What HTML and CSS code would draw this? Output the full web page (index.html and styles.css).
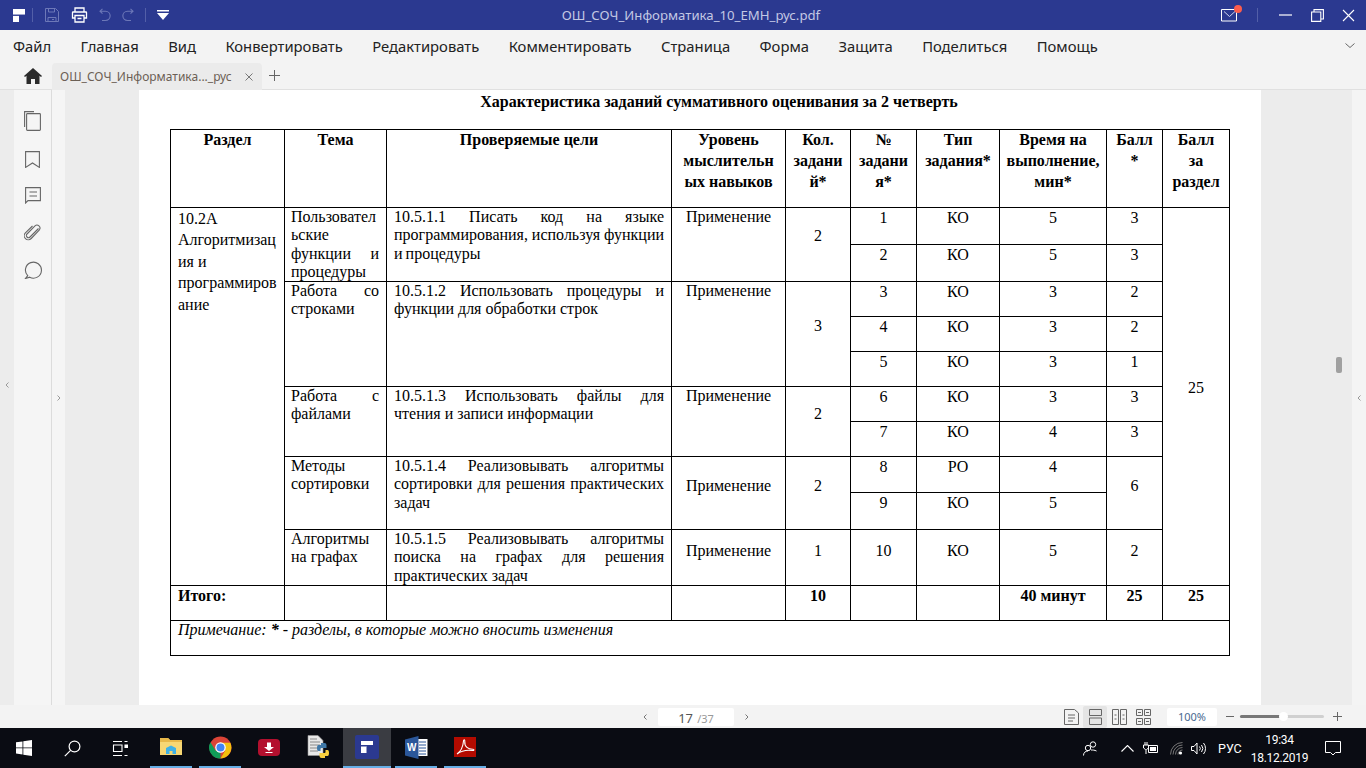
FILE: index.html
```html
<!DOCTYPE html>
<html lang="ru">
<head>
  <meta charset="UTF-8">
  <title>ОШ_СОЧ_Информатика_10_ЕМН_рус.pdf</title>
  <link rel="stylesheet" href="styles.css">
</head>
<body>
  <!-- title bar -->
  <div class="titlebar">
    <div class="quick">
      <svg class="logo" width="12" height="13" viewBox="0 0 12 13"><path fill="#fff" d="M0 0h12v6H6v7H0z"/><path fill="#2b3990" d="M0 5.500h12v1H6.500v.5H0z" opacity=".9"/></svg>
      <span class="sep"></span>
      <svg class="qi dim" width="16" height="16" viewBox="0 0 16 16" fill="none" stroke="#6d78b8"><path d="M1.500 1.500h10l3 3v10h-13z"/><path d="M4.500 1.500v3.500h6v-3.500M4 14.500v-4h8v4M8 12.500h2"/></svg>
      <svg class="qi" width="17" height="16" viewBox="0 0 17 16" fill="none" stroke="#fff" stroke-width="1.300"><path d="M4 5V1h9v4M4 11H1.500V5.500q0-.5.500-.5h13q.5 0 .5.500V11H13"/><path d="M4 8.500h9v6.500H4zM6.500 11.500h4"/></svg>
      <svg class="qi" width="12" height="14" viewBox="0 0 12 14" fill="none" stroke="#6d78b8" stroke-width="1.100"><path d="M3.500.8 1 3.200l2.500 2.400M1 3.200h5.500a4.500 4.500 0 0 1 0 9.300H3"/></svg>
      <svg class="qi" width="12" height="14" viewBox="0 0 12 14" fill="none" stroke="#6d78b8" stroke-width="1.100"><path d="M8.500.8 11 3.200 8.500 5.600M11 3.200H5.500a4.500 4.500 0 0 0 0 9.300H9"/></svg>
      <span class="sep"></span>
      <svg class="qi" width="12" height="10" viewBox="0 0 12 10"><path fill="#fff" d="M0 0h12v1.500H0zM0 3h12L6 10z"/></svg>
    </div>
    <div class="doc-title">ОШ_СОЧ_Информатика_10_ЕМН_рус.pdf</div>
    <div class="winbtns">
      <span class="mail">
        <svg width="17" height="13" viewBox="0 0 17 13" fill="none" stroke="#fff"><path d="M.5.500h15v11.500H.5z"/><path d="m3 2.500 5.500 5 5.500-5" stroke="#cfd3ec"/></svg>
        <i class="dot"></i>
      </span>
      <span class="sep sep-r"></span>
      <svg width="14" height="2" viewBox="0 0 14 2"><path stroke="#fff" stroke-width="1.200" d="M0 1h13"/></svg>
      <svg width="13" height="13" viewBox="0 0 13 13" fill="none" stroke="#fff" stroke-width="1.100"><path d="M.6 3h9.200v9.400H.6z"/><path d="M3 3V.6h9.400V10H10"/></svg>
      <svg width="13" height="13" viewBox="0 0 13 13" fill="none" stroke="#fff" stroke-width="1.100"><path d="m1 1 11 11M12 1 1 12"/></svg>
    </div>
  </div>

  <!-- menu -->
  <div class="menubar">
    <span>Файл</span><span>Главная</span><span>Вид</span><span>Конвертировать</span><span>Редактировать</span><span>Комментировать</span><span>Страница</span><span>Форма</span><span>Защита</span><span>Поделиться</span><span>Помощь</span>
    <svg class="collapse" width="10" height="6" viewBox="0 0 10 6" fill="none" stroke="#666"><path d="m.5.500 4.500 4 4.500-4"/></svg>
  </div>

  <!-- tabs -->
  <div class="tabbar">
    <div class="home">
      <svg width="18" height="16" viewBox="0 0 18 16"><path fill="#2a2a2a" d="M9 0 0 8l1 1 1.500-1.200V16H7v-5h4v5h4.500V7.800L17 9l1-1z"/></svg>
    </div>
    <div class="tab">
      <span class="tab-name">ОШ_СОЧ_Информатика..._рус</span>
      <svg width="8" height="8" viewBox="0 0 8 8" fill="none" stroke="#777"><path d="m.5.500 7 7M7.500.500l-7 7"/></svg>
    </div>
    <svg class="plus" width="11" height="11" viewBox="0 0 11 11" stroke="#666"><path d="M5.500 0v11M0 5.500h11"/></svg>
  </div>

  <!-- workspace -->
  <div class="workspace">
    <div class="edge"><svg width="4" height="6" viewBox="0 0 4 6" fill="none" stroke="#999"><path d="M3.500.5 1 3l2.500 2.500"/></svg></div>
    <div class="sidebar">
      <svg width="17" height="20" viewBox="0 0 17 20" fill="none" stroke="#666" stroke-width="1.100"><path d="M10 .6H.6V16"/><rect x="2.600" y="2.600" width="13.800" height="16.800" rx=".8"/></svg>
      <svg width="15" height="17" viewBox="0 0 15 17" fill="none" stroke="#666" stroke-width="1.100"><path d="M.6.600h13.800v15.800L7.500 12 .6 16.400z"/></svg>
      <svg width="16" height="17" viewBox="0 0 16 17" fill="none" stroke="#666" stroke-width="1.100"><path d="M.6.600h14.800v13H3L.6 16zM4.500 5h7.500M4.500 9h7.500"/></svg>
      <svg width="17" height="18" viewBox="0 0 17 18" fill="none" stroke="#666" stroke-width="1.100"><path d="M14.500 4.500 6 13a2 2 0 0 1-3-3l8-8.200a3 3 0 0 1 4.400 4L7.200 14.500a4 4 0 0 1-5.800-5.700L8.500 2"/></svg>
      <svg width="18" height="18" viewBox="0 0 18 18" fill="none" stroke="#666" stroke-width="1.100"><path d="M3.700 14.700a8 8 0 1 1 2 1.500L1.500 17.500z"/></svg>
    </div>
    <div class="fold"><svg width="4" height="6" viewBox="0 0 4 6" fill="none" stroke="#999"><path d="M.5.500 3 3 .5 5.500"/></svg></div>
    <div class="viewer">
      <div class="page">
        <h1 class="doc-head">Характеристика заданий суммативного оценивания за 2 четверть</h1>
        <table class="spec">
          <colgroup>
            <col class="c1"><col class="c2"><col class="c3"><col class="c4"><col class="c5"><col class="c6"><col class="c7"><col class="c8"><col class="c9"><col class="c10">
          </colgroup>
          <thead>
            <tr class="rh">
              <th>Раздел</th><th>Тема</th><th>Проверяемые цели</th><th>Уровень мыслительн ых навыков</th><th>Кол. задани й*</th><th>№ задани я*</th><th>Тип задания*</th><th class="wide">Время на выполнение, мин*</th><th>Балл *</th><th>Балл за раздел</th>
            </tr>
          </thead>
          <tbody>
            <tr class="r37">
              <td rowspan="10" class="sect">10.2A Алгоритмизация и программирование</td>
              <td rowspan="2" class="just topic">Пользовательские функции и процедуры</td>
              <td rowspan="2" class="just tight">10.5.1.1 Писать код на языке программирования, используя функции и процедуры</td>
              <td rowspan="2" class="lvl">Применение</td>
              <td rowspan="2" class="mid">2</td>
              <td class="cen">1</td><td class="cen">КО</td><td class="cen">5</td><td class="cen">3</td>
              <td rowspan="10" class="mid">25</td>
            </tr>
            <tr class="r37"><td class="cen">2</td><td class="cen">КО</td><td class="cen">5</td><td class="cen">3</td></tr>
            <tr class="r35">
              <td rowspan="3" class="just topic">Работа со строками</td>
              <td rowspan="3" class="just">10.5.1.2 Использовать процедуры и функции для обработки строк</td>
              <td rowspan="3" class="lvl">Применение</td>
              <td rowspan="3" class="mid">3</td>
              <td class="cen">3</td><td class="cen">КО</td><td class="cen">3</td><td class="cen">2</td>
            </tr>
            <tr class="r35"><td class="cen">4</td><td class="cen">КО</td><td class="cen">3</td><td class="cen">2</td></tr>
            <tr class="r35"><td class="cen">5</td><td class="cen">КО</td><td class="cen">3</td><td class="cen">1</td></tr>
            <tr class="r35">
              <td rowspan="2" class="just topic">Работа с файлами</td>
              <td rowspan="2" class="just">10.5.1.3 Использовать файлы для чтения и записи информации</td>
              <td rowspan="2" class="lvl">Применение</td>
              <td rowspan="2" class="mid">2</td>
              <td class="cen">6</td><td class="cen">КО</td><td class="cen">3</td><td class="cen">3</td>
            </tr>
            <tr class="r35"><td class="cen">7</td><td class="cen">КО</td><td class="cen">4</td><td class="cen">3</td></tr>
            <tr class="r36">
              <td rowspan="2" class="topic">Методы сортировки</td>
              <td rowspan="2" class="just">10.5.1.4 Реализовывать алгоритмы сортировки для решения практических задач</td>
              <td rowspan="2" class="mid low">Применение</td>
              <td rowspan="2" class="mid low">2</td>
              <td class="cen">8</td><td class="cen">РО</td><td class="cen">4</td>
              <td rowspan="2" class="mid low">6</td>
            </tr>
            <tr class="r37"><td class="cen">9</td><td class="cen">КО</td><td class="cen">5</td></tr>
            <tr class="r56">
              <td class="topic">Алгоритмы на графах</td>
              <td class="just">10.5.1.5 Реализовывать алгоритмы поиска на графах для решения практических задач</td>
              <td class="mid low">Применение</td>
              <td class="mid low">1</td><td class="mid low">10</td><td class="mid low">КО</td><td class="mid low">5</td><td class="mid low">2</td>
            </tr>
            <tr class="r35 total">
              <td class="left">Итого:</td><td></td><td></td><td></td><td>10</td><td></td><td></td><td>40 минут</td><td>25</td><td>25</td>
            </tr>
            <tr class="r35"><td colspan="10" class="note">Примечание: <b>*</b> - разделы, в которые можно вносить изменения</td></tr>
          </tbody>
        </table>
      </div>
      <div class="gutter"><span class="thumb"></span></div>
    </div>
    <div class="right-fold"><svg width="4" height="6" viewBox="0 0 4 6" fill="none" stroke="#999"><path d="M3.500.5 1 3l2.500 2.500"/></svg></div>
  </div>

  <!-- status bar -->
  <div class="statusbar">
    <div class="pager">
      <svg width="4" height="6" viewBox="0 0 4 6" fill="none" stroke="#777"><path d="M3.500.5 1 3l2.500 2.500"/></svg>
      <div class="page-box"><span class="cur">17</span> <span class="tot">/37</span></div>
      <svg width="4" height="6" viewBox="0 0 4 6" fill="none" stroke="#777"><path d="M.5.500 3 3 .5 5.500"/></svg>
    </div>
    <div class="views">
      <span class="view"><svg width="15" height="16" viewBox="0 0 15 16" fill="none" stroke="#666"><path d="M.5.500h10l4 3.500v11.500H.5zM4 6h7M4 9h7M4 12h5"/></svg></span>
      <span class="view on"><svg width="15" height="16" viewBox="0 0 15 16" fill="none" stroke="#666"><path d="M1.500.500h12v6h-12zM1.500 9h12v6.500h-12z"/></svg></span>
      <span class="view"><svg width="15" height="16" viewBox="0 0 15 16" fill="none" stroke="#666"><path d="M.5.500h6v15h-6zM8.500.500h6v15h-6zM2.500 6h2M2.500 10h2M10.500 6h2M10.500 10h2"/></svg></span>
      <span class="view"><svg width="15" height="16" viewBox="0 0 15 16" fill="none" stroke="#666"><path d="M.5.500h6v6h-6zM8.500.500h6v6h-6zM.5 9.500h6v6h-6zM8.500 9.500h6v6h-6zM2 3.500h3M10 3.500h3M2 12.500h3M10 12.500h3"/></svg></span>
    </div>
    <div class="zoom-box">100%</div>
    <svg class="zm" width="8" height="1" viewBox="0 0 8 1"><path stroke="#666" d="M0 .5h8"/></svg>
    <div class="slider"><i class="fill"></i><i class="knob"></i></div>
    <svg class="zp" width="9" height="9" viewBox="0 0 9 9" stroke="#666"><path d="M4.500 0v9M0 4.500h9"/></svg>
  </div>

  <!-- windows taskbar -->
  <div class="taskbar">
    <span class="tb-btn"><svg width="16" height="16" viewBox="0 0 16 16"><path fill="#fff" d="M0 2.300 6.500 1.400v6.100H0zM7.300 1.300 16 0v7.500H7.300zM0 8.300h6.500v6.200L0 13.600zM7.300 8.300H16V16l-8.700-1.300z"/></svg></span>
    <span class="tb-btn"><svg width="17" height="17" viewBox="0 0 17 17" fill="none" stroke="#fff" stroke-width="1.200"><circle cx="10.500" cy="6.500" r="5.400"/><path d="M6.600 10.400.8 16.200"/></svg></span>
    <span class="tb-btn"><svg width="16" height="15" viewBox="0 0 16 15" fill="none" stroke="#fff" stroke-width="1.100"><path d="M1 .5h9M1 14.500h9M1.500 4h8.500v6.500H1.500zM12.500.5h3M12.500 14.500h3"/><path d="M13 4h2.500v2.500H13z" fill="#fff"/></svg></span>
    <div class="apps">
      <span class="app open"><svg width="22" height="20" viewBox="0 0 22 20"><path fill="#f7d774" d="M0 1h8l2 2h12v15H0z"/><path fill="#e8b94a" d="M0 1h8l2 2h12v2H0z"/><path fill="#3fb1e6" d="M6 17v-6l5-2.500 5 2.500v6h-3.500v-3h-3v3z"/></svg></span>
      <span class="app open"><svg width="23" height="23" viewBox="0 0 24 24"><circle cx="12" cy="12" r="11.500" fill="#db4437"/><path fill="#0f9d58" d="M12 23.500A11.500 11.500 0 0 1 1.500 6.500L7 15.500l5 1z"/><path fill="#f4c20d" d="M12 7h10.200A11.500 11.500 0 0 1 12 23.500l5-8.500z"/><circle cx="12" cy="12" r="5.500" fill="#fff"/><circle cx="12" cy="12" r="4.200" fill="#4285f4"/></svg></span>
      <span class="app"><svg width="22" height="17" viewBox="0 0 22 17"><rect width="22" height="17" rx="4" fill="#b3102e"/><path fill="#fff" d="M9 3.500h4v4.500h3l-5 4-5-4h3z"/><path fill="#fff" d="M7.500 13h7v1h-7z"/></svg></span>
      <span class="app"><svg width="23" height="24" viewBox="0 0 23 24"><path fill="#e8e8e8" stroke="#999" stroke-width=".6" d="M1 .5h10l5 5v15H1z"/><path stroke="#888" d="M3 4h7M3 7h10M3 10h10M3 13h8M3 16h8"/><path fill="#3f78a8" d="M14 8h3.500q2 0 2 2v3h-5q-1 0-1 1v2h-2q-1.500 0-1.500-3t1.500-3H14z"/><path fill="#f8cf3e" d="M18 23h-3.500q-2 0-2-2v-3h5q1 0 1-1v-2h2q1.500 0 1.500 3t-1.500 3H18z"/></svg></span>
      <span class="app active"><svg width="24" height="24" viewBox="0 0 24 24"><rect width="24" height="24" rx="2" fill="#2b3990"/><path fill="#fff" d="M6 6h12v4.500h-6.500V18H6z"/><path fill="#2b3990" d="M6 10h12v1H11.500v.5H6z"/></svg></span>
      <span class="app open"><svg width="23" height="23" viewBox="0 0 23 23"><path fill="#fff" d="M11 3h11.500v17H11z"/><path stroke="#2b579a" d="M14 6h7M14 9h7M14 12h7M14 15h7M14 18h7"/><path fill="#2b579a" d="M0 3.500 13.500 0v23L0 19.500z"/><text class="word-w" x="2" y="15">W</text></svg></span>
      <span class="app open"><svg width="22" height="20" viewBox="0 0 22 20"><rect width="22" height="20" fill="#b30b00"/><path fill="none" stroke="#fff" stroke-width="1.100" d="M3 17c3-2 6-7 6.500-13 .2-2 1.500-1.500 1.300.5-.6 5 3.500 8 8.200 7.800 1.500 0 1 1.500-.5 1.200C12 12.500 7 14 3 17z"/></svg></span>
    </div>
    <div class="tray">
      <svg class="t-people" width="15" height="15" viewBox="0 0 15 15" fill="none" stroke="#fff"><circle cx="10" cy="3.500" r="2.700"/><circle cx="5" cy="7" r="2.700"/><path d="M.5 14.500c0-3 2-4.500 4.500-4.500M8 9c2 0 3.500 0 5.500 1"/></svg>
      <svg class="t-up" width="13" height="7" viewBox="0 0 13 7" fill="none" stroke="#fff" stroke-width="1.100"><path d="m.5 6.500 6-6 6 6"/></svg>
      <svg class="t-bat" width="15" height="12" viewBox="0 0 15 12" fill="none" stroke="#fff"><path d="M5.500 3.500h9v7h-9z"/><path fill="#fff" stroke="none" d="M7 5h6v4H7z"/><path d="M2 0v3M4 0v3M.5 3h5v3l-2 1.500H2.500L.5 6zM3 8v4"/></svg>
      <svg class="t-wifi" width="13" height="13" viewBox="0 0 13 13" fill="none" stroke="#777"><path d="M.5 12.500a12 12 0 0 1 12-12M3 12.500A9.500 9.500 0 0 1 12.500 3M5.500 12.500a7 7 0 0 1 7-7M8 12.500a4.500 4.500 0 0 1 4.500-4.500"/><circle cx="10.500" cy="11" r="1.600" fill="#fff" stroke="none"/></svg>
      <svg class="t-vol" width="16" height="13" viewBox="0 0 16 13" fill="none" stroke="#fff"><path d="M.5 4.500h2.500l3-3.500v11l-3-3.500H.5zM8.500 4.500a3 3 0 0 1 0 4M10.500 3a5.500 5.500 0 0 1 0 7M12.500 1a8.500 8.500 0 0 1 0 11"/></svg>
      <span class="lang">РУС</span>
      <div class="clock"><span>19:34</span><span>18.12.2019</span></div>
      <svg class="t-note" width="16" height="15" viewBox="0 0 16 15" fill="none" stroke="#fff"><path d="M.5.500h15v11h-5L8 14l-2.500-2.500h-5z"/></svg>
    </div>
  </div>
</body>
</html>
```

FILE: styles.css
```css
* { box-sizing:border-box; }
html, body { margin:0; height:100%; }
body { width:1366px; height:768px; overflow:hidden; display:flex; flex-direction:column; font-family:"Noto Sans", sans-serif; background:#f3f3f3; }

/* title bar */
.titlebar { height:30px; background:#2b3990; display:flex; align-items:center; position:relative; flex:none; }
.quick { display:flex; align-items:center; padding-left:13px; }
.logo { margin-right:7px; }
.sep { width:1px; height:14px; background:#535fa8; }
.qi { margin-left:11px; }
.quick .qi + .sep { margin-left:11px; }
.doc-title { position:absolute; left:16px; right:0; text-align:center; font-size:13.200px; color:#c3c8e4; }
.winbtns { margin-left:auto; display:flex; align-items:center; gap:18px; padding-right:11px; }
.mail { position:relative; display:flex; margin-right:1px; }
.dot { position:absolute; top:-4px; right:-4px; width:8px; height:8px; border-radius:50%; background:#fc5d4c; }
.sep-r { margin-right:3px; }

/* menu */
.menubar { height:32px; flex:none; display:flex; align-items:center; gap:29.400px; padding:0 11px 0 13px; font-size:14.800px; color:#222; background:#f3f3f3; }
.collapse { margin-left:auto; }

/* tabs */
.tabbar { height:28px; flex:none; display:flex; align-items:flex-end; background:#f3f3f3; border-bottom:1px solid #e0e0e0; }
.home { width:52px; height:27px; display:flex; align-items:center; justify-content:center; padding-left:14px; }
.tab { width:210px; height:27px; background:#ebebeb; border-radius:4px 4px 0 0; display:flex; align-items:center; justify-content:space-between; padding:0 9px 0 8px; margin-bottom:-1px; }
.tab-name { font-size:12px; color:#6b5f55; white-space:nowrap; }
.plus { margin:0 0 8px 7px; }

/* workspace */
.workspace { flex:1; display:flex; min-height:0; }
.edge { width:14px; background:#ececec; display:flex; align-items:center; justify-content:center; padding-bottom:26px; }
.sidebar { width:38px; background:#f5f5f5; border-right:1px solid #dcdcdc; display:flex; flex-direction:column; align-items:center; gap:19.500px; padding-top:21px; }
.fold { width:13px; background:#f5f5f5; display:flex; align-items:center; justify-content:center; }
.viewer { flex:1; background:#ececec; display:flex; justify-content:center; position:relative; padding-left:74px; }
.gutter { width:91px; flex:none; position:relative; }
.thumb { position:absolute; left:75px; top:267px; width:6px; height:16px; border-radius:2px; background:#a0a0a0; }
.right-fold { width:14px; background:#f4f4f4; display:flex; align-items:center; justify-content:center; }

/* pdf page */
.page { width:1122px; flex:none; background:#fff; padding:0 31px; font-family:"Liberation Serif", serif; color:#000; font-size:16px; overflow:hidden; }
.doc-head { margin:0; font-size:16px; line-height:24px; text-align:center; font-weight:bold; padding:0 0 0 38px; height:39px; }
.spec { width:1059px; table-layout:fixed; border-collapse:collapse; line-height:18.300px; }
.c1 { width:114px; } .c2 { width:102px; } .c3 { width:285px; } .c4 { width:114px; } .c5 { width:65px; }
.c6 { width:66px; } .c7 { width:83px; } .c8 { width:107px; } .c9 { width:56px; } .c10 { width:67px; }
.spec th, .spec td { border:1px solid #000; padding:0 7px; vertical-align:top; overflow-wrap:anywhere; font-weight:normal; }
.spec th { font-weight:bold; text-align:center; line-height:20.800px; }
.spec th.wide { padding:0 2px; }
.rh { height:78px; }
.r35 { height:35px; } .r36 { height:36px; } .r37 { height:37px; } .r56 { height:56px; }
.spec td.sect { line-height:21.400px; }
.spec td.just { text-align:justify; }
.spec td.topic { padding-left:6px; }
.spec td.tight { word-spacing:-1px; }
.spec td.lvl { text-align:center; }
.spec td.cen { text-align:center; line-height:19px; }
.spec td.mid { text-align:center; vertical-align:middle; padding-bottom:16px; }
.spec td.low { padding-bottom:14px; }
.spec .total td { font-weight:bold; text-align:center; padding-top:1px; }
.spec .total td.left { text-align:left; }
.spec td.note { font-style:italic; }

/* status bar */
.statusbar { height:23px; flex:none; background:#f3f3f3; display:flex; align-items:center; }
.pager { display:flex; align-items:center; margin-left:643px; }
.page-box { width:76px; height:18px; background:#fff; border-radius:2px; margin:0 11px; text-align:center; line-height:18px; }
.cur { font-size:13px; color:#555; }
.tot { font-size:11px; color:#999; }
.views { display:flex; align-items:center; margin-left:310px; }
.view { width:24px; height:22px; display:flex; align-items:center; justify-content:center; border-radius:2px; }
.view.on { background:#e4e4e4; }
.zoom-box { width:50px; height:18px; background:#fff; border-radius:2px; margin-left:12px; text-align:center; font-size:11px; line-height:18px; color:#4a6a90; }
.zm { margin-left:9px; }
.slider { width:84px; height:3px; background:#d0d0d0; border-radius:2px; margin-left:6px; position:relative; }
.fill { position:absolute; left:0; top:0; bottom:0; width:43px; background:#777; border-radius:2px; }
.knob { position:absolute; left:39px; top:-3px; width:9px; height:9px; border-radius:50%; background:#fff; }
.zp { margin-left:9px; }

/* taskbar */
.taskbar { height:40px; flex:none; background:#0a0c13; display:flex; align-items:center; color:#fff; font-family:Roboto, sans-serif; }
.tb-btn { width:48px; height:40px; display:flex; align-items:center; justify-content:center; }
.apps { display:flex; margin-left:3px; gap:1px; }
.app { width:48px; height:40px; display:flex; align-items:center; justify-content:center; border-bottom:2px solid transparent; }
.app.open { border-bottom-color:transparent; border-image:linear-gradient(to right, transparent 4px, #66aee6 4px, #66aee6 44px, transparent 44px) 1; }
.app.active { background:#3a3c42; border-bottom-color:#66aee6; }
.word-w { fill:#fff; font:bold 10px "Liberation Sans", sans-serif; }
.tray { margin-left:auto; display:flex; align-items:center; padding-right:25px; }
.t-up { margin-left:23px; }
.t-bat { margin-left:9px; }
.t-wifi { margin-left:12px; }
.t-vol { margin-left:8px; }
.lang { font-size:12.500px; margin-left:11px; width:22px; white-space:nowrap; }
.clock { display:flex; flex-direction:column; align-items:center; font-size:12px; letter-spacing:-.3px; line-height:18px; width:53px; margin-left:13px; padding-top:2px; }
.t-note { margin-left:19px; }
```
